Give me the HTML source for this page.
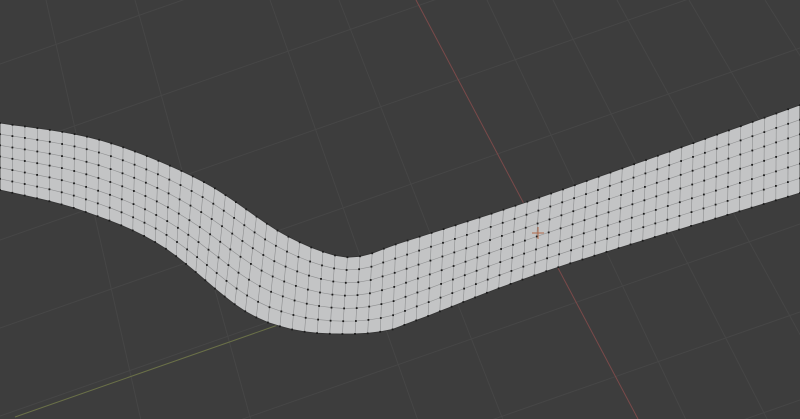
<!DOCTYPE html>
<html><head><meta charset="utf-8"><style>
html,body{margin:0;padding:0;background:#3d3d3d;overflow:hidden;width:800px;height:419px}
svg{display:block;position:absolute;left:0;top:0}
</style></head><body>
<svg id="s" width="800" height="419" viewBox="0 0 800 419" xmlns="http://www.w3.org/2000/svg">
<rect width="800" height="419" fill="#3d3d3d"/>
<g id="grid" stroke="#464646" stroke-width="1" fill="none"></g>
<line x1="416" y1="0" x2="638" y2="419" stroke="#7a4a4a" stroke-width="1"/>
<line x1="15" y1="417" x2="278" y2="325" stroke="#6a7048" stroke-width="1"/>
<g id="mesh"></g>
</svg>
<script>
(function(){
var NS="http://www.w3.org/2000/svg";
var g=document.getElementById('grid');
function ln(par,x1,y1,x2,y2,st,w){var l=document.createElementNS(NS,'line');l.setAttribute('x1',x1);l.setAttribute('y1',y1);l.setAttribute('x2',x2);l.setAttribute('y2',y2);if(st)l.setAttribute('stroke',st);if(w)l.setAttribute('stroke-width',w);par.appendChild(l);}
var tops=[46,135,270,339,487,553,617,689,765];
tops.forEach(function(x){var k=0.2+0.45*(x/800);ln(g,x,0,x+k*419,419);});
for(var c=-200;c<900;c+=88){ln(g,0,c,800,c-280);}
var topE=[[0,123],[100,140],[200,180],[280,232],[330,254],[362,256],[400,243],[541,197],[800,105]];
var botE=[[0,190],[80,210],[160,245],[240,308],[290,329],[340,334],[385,331],[420,319],[556,268],[800,193]];
function cr(p){var out=[];var n=p.length;for(var i=0;i<n-1;i++){var p0=p[Math.max(0,i-1)],p1=p[i],p2=p[i+1],p3=p[Math.min(n-1,i+2)];for(var s=0;s<50;s++){var t=s/50,t2=t*t,t3=t2*t;var f=function(a,b,c,d){return 0.5*((2*b)+(-a+c)*t+(2*a-5*b+4*c-d)*t2+(-a+3*b-3*c+d)*t3)};out.push([f(p0[0],p1[0],p2[0],p3[0]),f(p0[1],p1[1],p2[1],p3[1])]);}}out.push(p[n-1]);return out;}
function resample(p,N){var L=[0];for(var i=1;i<p.length;i++){L.push(L[i-1]+Math.hypot(p[i][0]-p[i-1][0],p[i][1]-p[i-1][1]));}var tot=L[L.length-1];var out=[];var j=0;for(var k=0;k<=N;k++){var d=tot*k/N;while(j<L.length-2&&L[j+1]<d)j++;var u=(d-L[j])/((L[j+1]-L[j])||1);u=Math.max(0,Math.min(1,u));out.push([p[j][0]+(p[j+1][0]-p[j][0])*u,p[j][1]+(p[j+1][1]-p[j][1])*u]);}return out;}
var N=68,R=6;
var T=resample(cr(topE),N),B=resample(cr(botE),N);
var m=document.getElementById('mesh');
function fm(p){return p[0].toFixed(1)+','+p[1].toFixed(1);}
var d='M'+T.map(fm).join('L')+'L'+B.slice().reverse().map(fm).join('L')+'Z';
var poly=document.createElementNS(NS,'path');poly.setAttribute('d',d);poly.setAttribute('fill','#c3c4c5');poly.setAttribute('stroke','#333');poly.setAttribute('stroke-width','0.8');m.appendChild(poly);
function P(i,r){var a=T[i],b=B[i],u=r/R;return [a[0]+(b[0]-a[0])*u,a[1]+(b[1]-a[1])*u];}
var gl=document.createElementNS(NS,'g');gl.setAttribute('stroke','#8e8f90');gl.setAttribute('stroke-width','0.6');gl.setAttribute('fill','none');m.appendChild(gl);
for(var i=1;i<N;i++){ln(gl,T[i][0],T[i][1],B[i][0],B[i][1]);}
for(var r=1;r<R;r++){var dd='';for(var i2=0;i2<=N;i2++){dd+=(i2?'L':'M')+fm(P(i2,r));}var pa=document.createElementNS(NS,'path');pa.setAttribute('d',dd);gl.appendChild(pa);}
var dots=document.createElementNS(NS,'g');dots.setAttribute('fill','#1c1c1c');m.appendChild(dots);
for(var i3=0;i3<=N;i3++)for(var r2=0;r2<=R;r2++){var p=P(i3,r2);var c2=document.createElementNS(NS,'rect');c2.setAttribute('x',(p[0]-0.9).toFixed(1));c2.setAttribute('y',(p[1]-0.9).toFixed(1));c2.setAttribute('width','1.8');c2.setAttribute('height','1.8');dots.appendChild(c2);}
ln(m,532,233,544,233,'#b06a4a','1');ln(m,538,227,538,239,'#b06a4a','1');
})();
</script>
</body></html>
